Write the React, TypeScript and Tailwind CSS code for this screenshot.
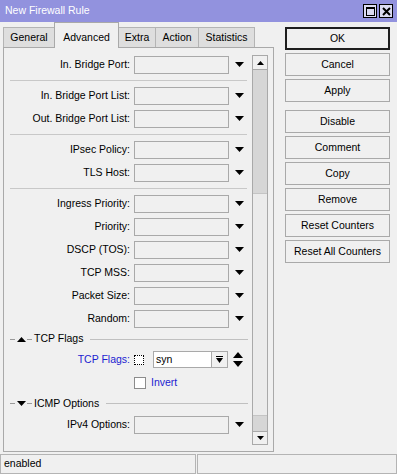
import React from "react";

const font = { fontFamily: '"Liberation Sans", Arial, sans-serif' };

function DownArrow() {
  return (
    <svg width="9" height="5" viewBox="0 0 9 5" className="block">
      <polygon points="0,0 9,0 4.5,5" fill="#000" />
    </svg>
  );
}

function Field({ label }: { label: string }) {
  return (
    <div className="flex h-[23px] items-center">
      <div className="w-[126px] text-right whitespace-nowrap">{label}</div>
      <div className="ml-[4px] h-[18px] w-[95px] border border-[#a9a9a9] bg-[#f0f0f0]" />
      <div className="ml-[6px]">
        <DownArrow />
      </div>
    </div>
  );
}

function Separator() {
  return (
    <div className="flex h-[8px] items-center">
      <div className="ml-[6px] h-px w-[237px] bg-[#c8c8c8]" />
    </div>
  );
}

function Section({ title, open, h }: { title: string; open: boolean; h: string }) {
  return (
    <div className={`flex items-center ${h}`}>
      <div className="ml-[6px] h-px w-[5px] bg-[#9a9a9a]" />
      <svg width="9" height="5" viewBox="0 0 9 5" className="ml-[2px] block">
        <polygon points={open ? "0,5 9,5 4.5,0" : "0,0 9,0 4.5,5"} fill="#000" />
      </svg>
      <div className="ml-[1px] h-px w-[5px] bg-[#9a9a9a]" />
      <span className="ml-[2px] whitespace-nowrap">{title}</span>
      <div className="ml-[7px] mr-[4px] h-px flex-1 bg-[#c0c0c0]" />
    </div>
  );
}

const tabs = [
  { name: "General", w: "w-[52px]" },
  { name: "Advanced", w: "w-[65px]", active: true },
  { name: "Extra", w: "w-[38px]" },
  { name: "Action", w: "w-[44px]" },
  { name: "Statistics", w: "w-[57px]" },
];

const buttons = [
  ["OK", "Cancel", "Apply"],
  ["Disable", "Comment", "Copy", "Remove", "Reset Counters", "Reset All Counters"],
];

export default function App() {
  return (
    <div className="flex h-[474px] w-[397px] flex-col bg-[#f0f0f0] text-[10.5px] text-black" style={font}>
      {/* title bar */}
      <div className="flex h-[22px] shrink-0 items-center bg-[#9292de] pl-[5px] text-white">
        <span className="text-[10.5px]">New Firewall Rule</span>
        <div className="ml-auto mr-[4px] flex gap-[2px]">
          <div className="flex h-[14px] w-[14px] items-center justify-center border border-black bg-[#dcdcf2]">
            <div className="h-[9px] w-[9px] border border-t-2 border-black" />
          </div>
          <div className="flex h-[14px] w-[14px] items-center justify-center border border-black bg-[#dcdcf2]">
            <svg width="9" height="9" viewBox="0 0 9 9" className="block">
              <path d="M1 1 L8 8 M8 1 L1 8" stroke="#000" strokeWidth="2" />
            </svg>
          </div>
        </div>
      </div>

      <div className="flex flex-1">
        {/* left: tabs + panel */}
        <div className="ml-[3px] flex w-[271px] flex-col">
          <div className="flex h-[25px] items-end">
            {tabs.map((t) =>
              t.active ? (
                <div
                  key={t.name}
                  className={`relative z-10 -mb-px -ml-px flex h-[26px] items-start justify-center border border-b-0 border-[#a9a9a9] bg-[#f0f0f0] pt-[7px] ${t.w}`}
                >
                  {t.name}
                </div>
              ) : (
                <div
                  key={t.name}
                  className={`-ml-px flex h-[20px] items-center justify-center border border-b-0 border-[#b4b4b4] bg-[#dedede] pt-px first:ml-0 ${t.w}`}
                >
                  {t.name}
                </div>
              )
            )}
          </div>

          <div className="flex h-[405px] border border-[#a9a9a9] bg-[#f0f0f0]">
            <div className="w-[248px] pt-[5px]">
              <Field label="In. Bridge Port:" />
              <Separator />
              <Field label="In. Bridge Port List:" />
              <Field label="Out. Bridge Port List:" />
              <Separator />
              <Field label="IPsec Policy:" />
              <Field label="TLS Host:" />
              <Separator />
              <Field label="Ingress Priority:" />
              <Field label="Priority:" />
              <Field label="DSCP (TOS):" />
              <Field label="TCP MSS:" />
              <Field label="Packet Size:" />
              <Field label="Random:" />
              <Section title="TCP Flags" open h="h-[18px]" />
              <div className="flex h-[23px] items-center">
                <div className="w-[126px] text-right text-[#1c1cd0]">TCP Flags:</div>
                <div className="ml-[4px] h-[10px] w-[10px] border border-dotted border-black bg-white" />
                <div className="ml-[9px] flex h-[17px] w-[59px] items-center border border-[#a9a9a9] bg-white pl-[2px]">
                  syn
                </div>
                <div className="flex h-[17px] w-[16px] items-center justify-center border border-l-0 border-[#a9a9a9] bg-[#f0f0f0]">
                  <svg width="7" height="7" viewBox="0 0 7 7" className="block">
                    <rect x="0" y="0" width="7" height="1" fill="#000" />
                    <polygon points="0,2 7,2 3.5,7" fill="#000" />
                  </svg>
                </div>
                <svg width="10" height="15" viewBox="0 0 10 15" className="ml-[5px] block">
                  <polygon points="0,6 10,6 5,0" fill="#000" />
                  <polygon points="0,9 10,9 5,15" fill="#000" />
                </svg>
              </div>
              <div className="flex h-[23px] items-center">
                <div className="ml-[130px] h-[12px] w-[12px] border border-[#8c8c8c] bg-white" />
                <span className="ml-[5px] text-[#1c1cd0]">Invert</span>
              </div>
              <Section title="ICMP Options" open={false} h="h-[19px]" />
              <Field label="IPv4 Options:" />
            </div>

            {/* scrollbar */}
            <div className="mb-[6px] mt-[7px] flex w-[16px] flex-col border border-[#a9a9a9]">
              <div className="flex h-[14px] items-center justify-center border-b border-[#a9a9a9] bg-[#f0f0f0]">
                <svg width="7" height="4" viewBox="0 0 7 4" className="block">
                  <polygon points="0,4 7,4 3.5,0" fill="#000" />
                </svg>
              </div>
              <div className="h-[124px] border-b border-[#c4c4c4] bg-[#d6d6d6]" />
              <div className="flex-1 bg-[#ebebeb]" />
              <div className="h-[16px] border-t border-[#c4c4c4] bg-[#d6d6d6]" />
              <div className="flex h-[13px] items-center justify-center border-t border-[#a9a9a9] bg-[#f0f0f0]">
                <svg width="7" height="4" viewBox="0 0 7 4" className="block">
                  <polygon points="0,0 7,0 3.5,4" fill="#000" />
                </svg>
              </div>
            </div>
          </div>
        </div>

        {/* right: buttons */}
        <div className="ml-[11px] mt-[5px] flex w-[105px] flex-col gap-[8px]">
          {buttons.map((group, gi) => (
            <div key={gi} className="flex flex-col gap-[3px]">
              {group.map((b) => (
                <div
                  key={b}
                  className={`flex h-[23px] items-center justify-center bg-[#f0f0f0] ${
                    b === "OK" ? "border-2 border-[#1e1e1e]" : "border border-[#a9a9a9]"
                  }`}
                >
                  {b}
                </div>
              ))}
            </div>
          ))}
        </div>
      </div>

      {/* status bar */}
      <div className="mt-[2px] flex h-[20px] shrink-0">
        <div className="flex w-[196px] items-center border border-[#b4b4b4] pl-[3px]">enabled</div>
        <div className="ml-[1px] flex-1 border border-[#b4b4b4]" />
      </div>
    </div>
  );
}
